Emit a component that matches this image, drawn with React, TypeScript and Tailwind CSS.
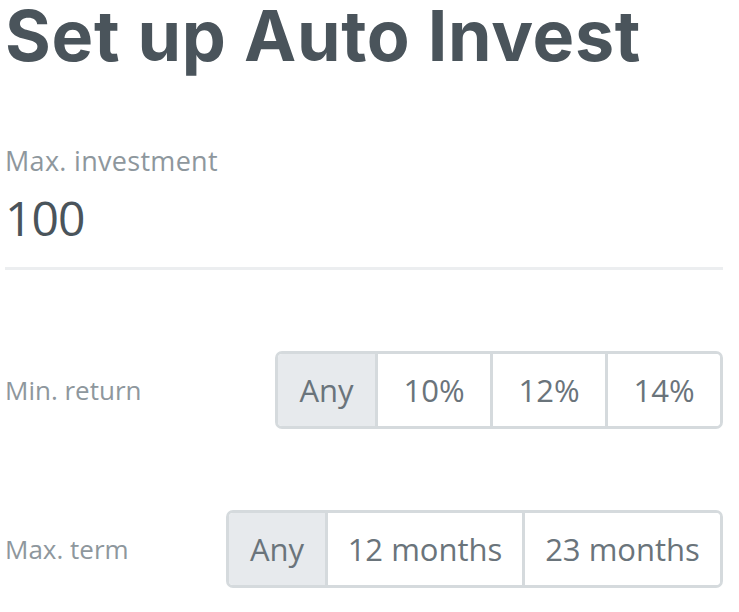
import React from "react";

const font = { fontFamily: '"Open Sans", "Noto Sans", sans-serif' };

function Segmented({ items, widths }: { items: string[]; widths: number[] }) {
  return (
    <div className="flex h-[78px] rounded-[7px] border-[3px] border-[#d5dadd] overflow-hidden">
      {items.map((it, i) => (
        <div
          key={it}
          className={
            "flex items-center justify-center text-[31px] text-[#6a747b] " +
            (i > 0 ? "border-l-[3px] border-[#d5dadd] " : "") +
            (i === 0 ? "bg-[#e7eaed]" : "bg-white")
          }
          style={{ width: widths[i] }}
        >
          {it}
        </div>
      ))}
    </div>
  );
}

export default function App() {
  return (
    <div className="w-[739px] h-[612px] bg-white pl-[5px] pr-[16px] pt-[1px]" style={font}>
      <h1
        className="-mt-[8px] text-[70px] font-bold leading-[86px] text-[#4a545b] tracking-[0.7px]"
        style={{ fontFamily: '"Inter", sans-serif' }}
      >
        Set up Auto Invest
      </h1>
      <div className="mt-[68px] text-[27px] leading-none text-[#8e979d] tracking-[0.3px]">Max. investment</div>
      <div className="mt-[20px] text-[48px] leading-none text-[#4a545b] tracking-[-1px]">100</div>
      <div className="mt-[25px] h-[3px] bg-[#eceef0]" />
      <div className="mt-[81px] flex items-center justify-between">
        <div className="text-[26px] text-[#8e979d]">Min. return</div>
        <Segmented items={["Any", "10%", "12%", "14%"]} widths={[97, 115, 115, 115]} />
      </div>
      <div className="mt-[81px] flex items-center justify-between">
        <div className="text-[26px] text-[#8e979d]">Max. term</div>
        <Segmented items={["Any", "12 months", "23 months"]} widths={[96, 197, 198]} />
      </div>
    </div>
  );
}
